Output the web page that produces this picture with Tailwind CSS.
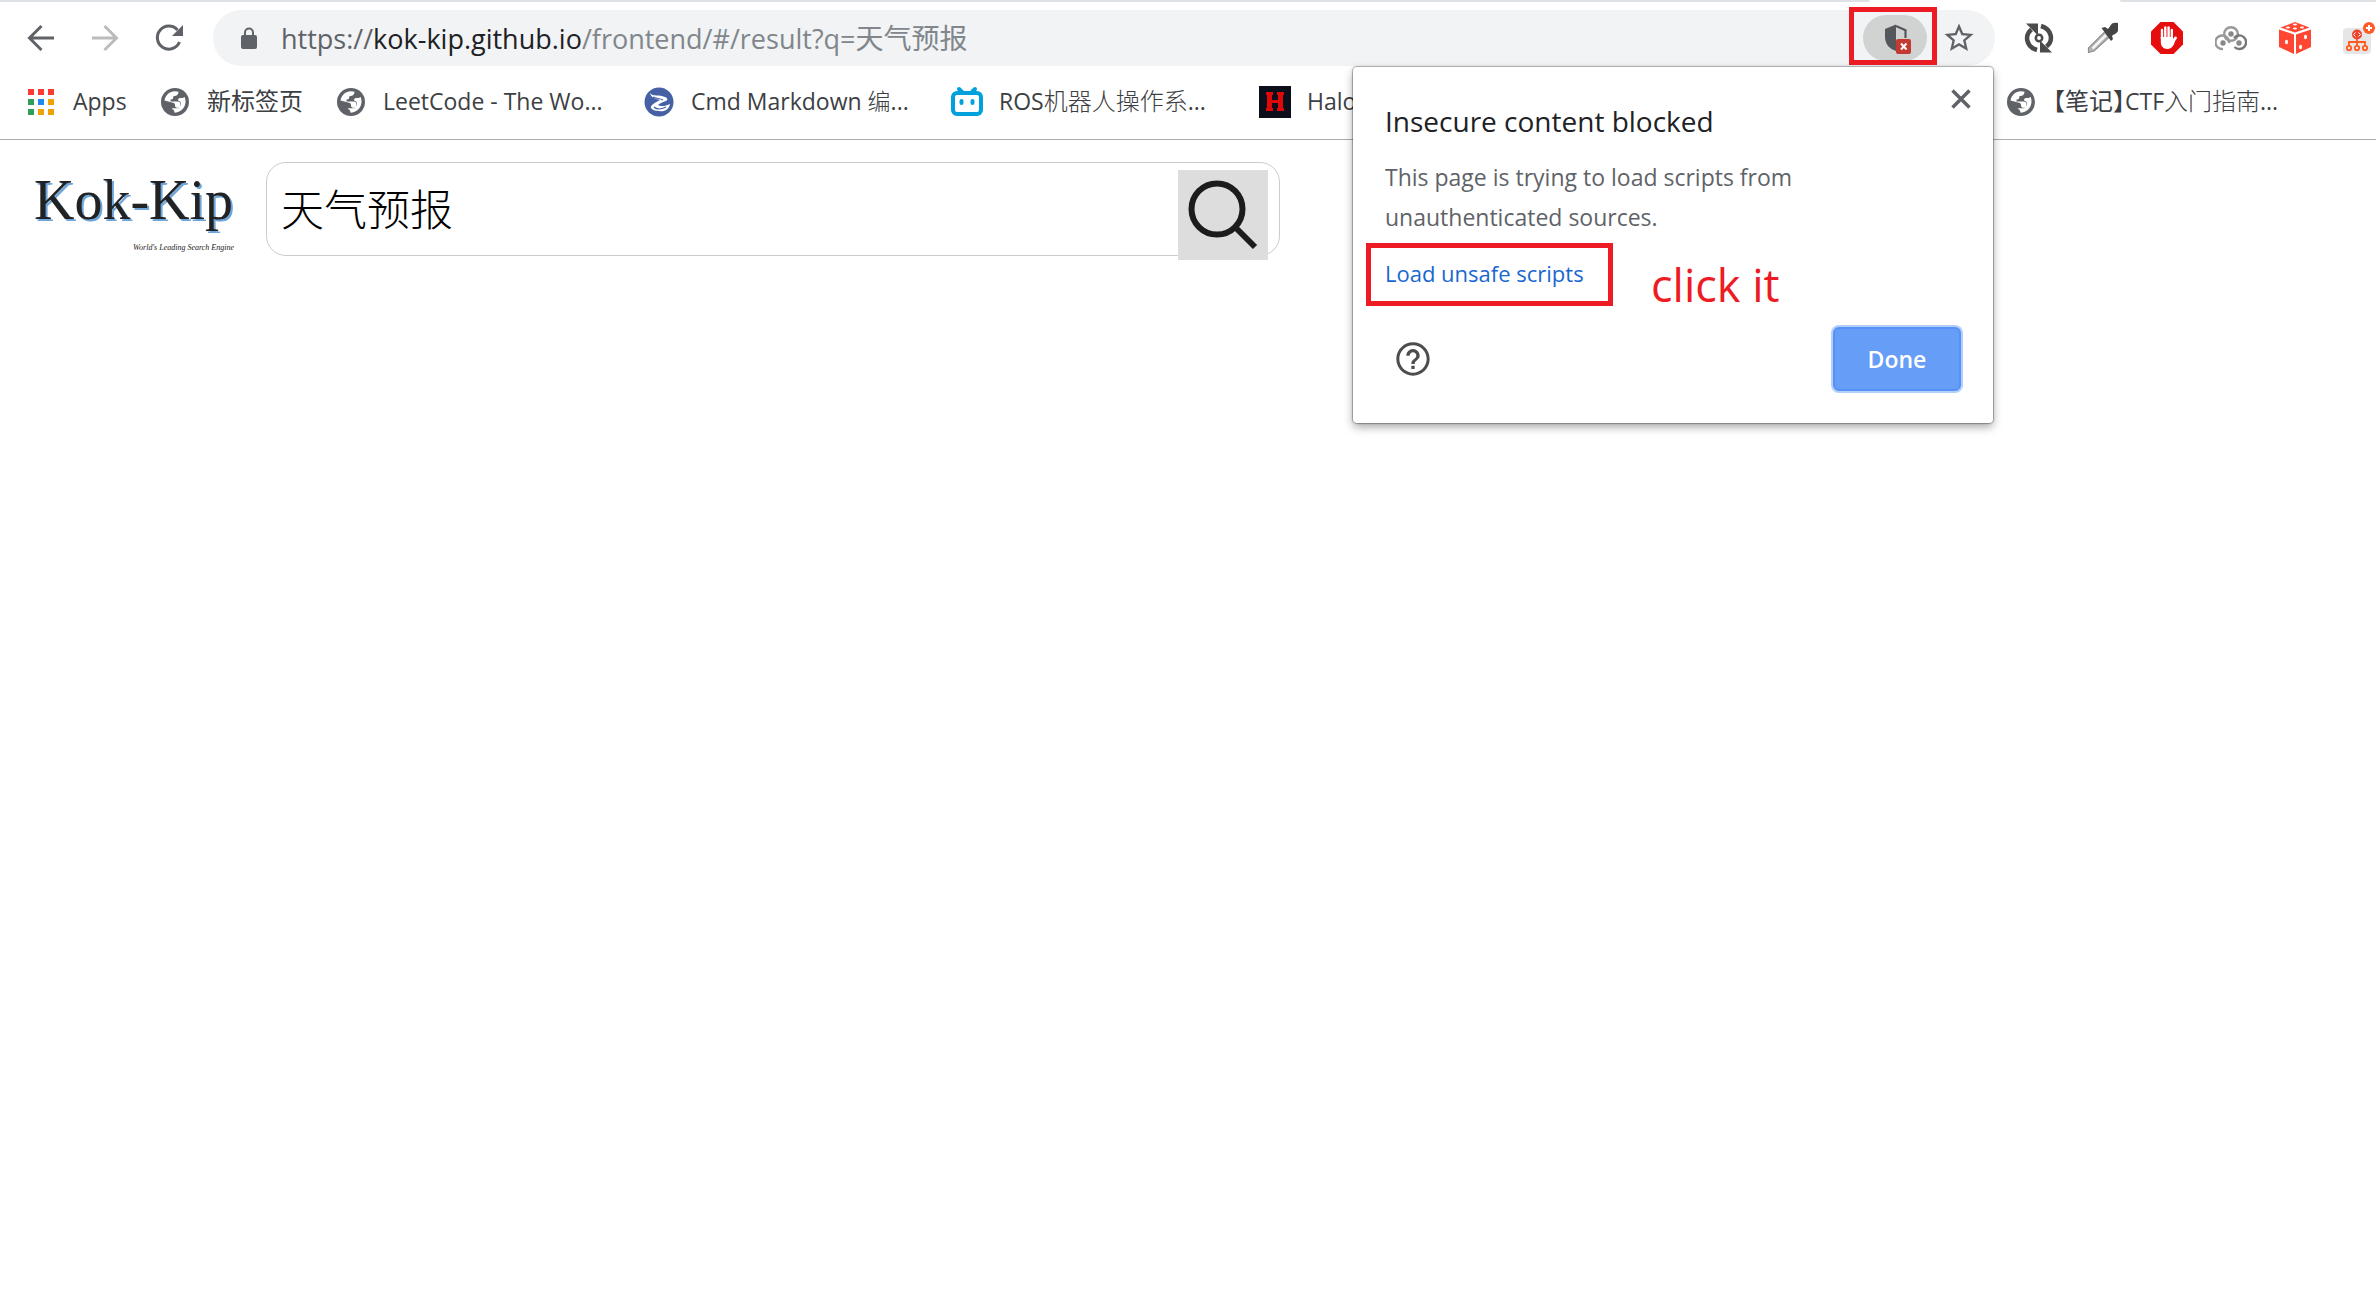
<!DOCTYPE html>
<html lang="zh-CN">
<head>
<meta charset="utf-8">
<title>Kok-Kip</title>
<script src="https://cdn.jsdelivr.net/npm/@tailwindcss/browser@4"></script>
</head>
<body class="min-h-screen bg-white font-['Open_Sans','Noto_Sans_CJK_SC',sans-serif] text-[#3c4043] overflow-x-hidden">
<svg class="hidden" aria-hidden="true">
  <symbol id="globe" viewBox="-2 -2 32 32"><circle cx="14" cy="14" r="14" fill="#5f6368"/><path fill="#fff" d="M3.500 12.500C4.500 7 8.500 3.500 14 3.300c1.500 0 2.500.2 3.500.5 0 2.500-1.500 4.200-4 4.200-1 0-1.300.7-1.300 1.500 0 1.400-1 2-2.700 2v2h7c2 0 3 .8 3 3.200v3h-2.500c-2 0-3-.5-3-2.500 0-1.700-1-2.700-3-2.700zM13.500 24.700c0-1.800-.5-2.500-3-4.500h5.500c3 0 4-1.200 4-4 0-2-1-3.500-3-3.700 0-1.500.7-2.500 2-2.500 1.500 0 3.500 0 4.800-1 2.700 8-2.300 15.700-10.300 15.700z"/></symbol>
</svg>

<header class="relative border-b border-[#aaadb0] bg-white">
  <div class="flex h-[2px] justify-between">
    <div class="flex-1 rounded-br-lg bg-[#dee1e6]"></div>
    <div class="ml-[250px] w-[256px] rounded-bl-lg bg-[#dee1e6]"></div>
  </div>

  <div class="flex items-center pt-2 pl-[25px]">
    <nav class="flex gap-8" aria-label="Navigation">
      <button aria-label="Back"><svg class="size-8" viewBox="0 0 32 32" fill="none" stroke="#5f6368" stroke-width="3"><path d="M29 16H5M16.500 4 4.500 16l12 12"/></svg></button>
      <button aria-label="Forward" disabled><svg class="size-8" viewBox="0 0 32 32" fill="none" stroke="#babcbe" stroke-width="3"><path d="M3 16h24M15.500 4l12 12-12 12"/></svg></button>
      <button aria-label="Reload"><svg class="size-8" viewBox="0 0 32 32" fill="none" stroke="#5f6368" stroke-width="3"><path d="M26.500 20A11.500 11.500 0 1 1 24.500 8"/><path fill="#5f6368" stroke="none" d="M30 3v11H19z"/></svg></button>
    </nav>
    <div class="ml-7 flex h-14 flex-1 items-center rounded-full bg-[#f1f3f4] pr-5 pl-7">
      <svg class="mr-6 h-[22px] w-4" viewBox="0 0 16 22"><rect y="8" width="16" height="14" rx="2" fill="#5f6368"/><path d="M4 9V5.500a4 4 0 0 1 8 0V9" fill="none" stroke="#5f6368" stroke-width="2"/></svg>
      <div class="flex-1 text-[27px] leading-8 whitespace-nowrap text-[#80868b]"><span class="text-[#5f6368]">https://</span><span class="text-[#202124]">kok-kip.github.io</span>/frontend/#/result?q=<span class="text-[28px]">天气预报</span></div>
      <div class="relative">
        <button class="flex h-[46px] w-16 items-center justify-center rounded-full bg-[#d1d3d3]" aria-label="Insecure content blocked">
          <svg class="size-8" viewBox="0 0 32 32"><path fill="#54585d" d="M17 2.500 6 7v8c0 7 4.500 12 11 14z"/><path d="M17 4l9.500 4.200V16" fill="none" stroke="#54585d" stroke-width="2.200"/><rect x="17" y="17" width="15" height="15" rx="2" fill="#c53a30"/><path d="M22 21.500l5.500 6m0-6-5.500 6" stroke="#fff" stroke-width="2"/></svg>
        </button>
        <div class="pointer-events-none absolute -top-[8px] -left-[14px] h-[58px] w-[88px] border-5 border-[#ed1c24]"></div>
      </div>
      <button class="ml-4" aria-label="Bookmark this page"><svg class="size-8" viewBox="1 1 22 22" fill="#5f6368"><path d="M22 9.240l-7.190-.62L12 2 9.190 8.630 2 9.240l5.460 4.730L5.820 21 12 17.270 18.180 21l-1.630-7.030L22 9.240zM12 15.400l-3.760 2.270 1-4.280-3.320-2.880 4.380-.38L12 6.100l1.710 4.040 4.380.38-3.320 2.880 1 4.280L12 15.400z"/></svg></button>
    </div>
    <div class="ml-7 flex gap-8 pr-px">
      <button aria-label="Sync"><svg class="size-8" viewBox="0 0 32 32" fill="none" stroke="#4b4b4b"><path stroke-width="4.500" d="M14 28C2.500 24.500 1.500 13 8.500 7.500M18 4C29.500 7.500 30.500 19 23.500 24.500"/><path fill="#4b4b4b" stroke="none" d="M3 1.500h12v12zM29 30.500H17v-12z"/><circle cx="16" cy="16" r="3.200" stroke-width="2.500"/></svg></button>
      <button aria-label="Color picker"><svg class="size-8" viewBox="0 0 32 32"><path d="M1.500 30.500v-4.500L18 9.500l5 5L7 29z" fill="#b5b5b5" stroke="#8e8e8e" stroke-width="1.200"/><path d="M5.500 26.500 19 13" stroke="#f5f5f5" stroke-width="2.500"/><path fill="#444" d="M14.500 6l3.500-1 3 2 4-5.500C28 0 31 1 31 1v8c-1 2-3 3-5 4l-1 1 1 3-2 2z"/></svg></button>
      <button aria-label="AdBlock"><svg class="size-8" viewBox="0 0 32 32"><path fill="#e60d0d" d="M9.500 0h13L32 9.500v13L22.500 32h-13L0 22.500v-13z"/><g stroke="#fff" stroke-width="2.400" stroke-linecap="round" fill="none"><path d="M11 17V8M14.300 15V5.500M17.600 15V5.500M20.800 17V8"/><path stroke-width="3" d="M21 21l3.500-5"/></g><path fill="#fff" d="M9.800 15H22v5l2-1c-1 4-3 8-7.500 8S9.800 24 9.800 20z"/></svg></button>
      <button aria-label="Linked circles"><svg class="size-8" viewBox="0 0 32 32" fill="none" stroke-width="2.400"><path stroke="#999" d="M8 27a6.800 6.800 0 1 1 6-6"/><circle cx="16" cy="12" r="6.800" stroke="#999"/><path stroke="#777" d="M19 16a6.800 6.800 0 1 1 .5 9"/><g stroke="none" fill="#888"><circle cx="8" cy="21" r="2.700"/><circle cx="16" cy="12" r="2.700"/><circle cx="24" cy="21" r="2.700"/></g></svg></button>
      <button aria-label="Dice"><svg class="size-8" viewBox="0 0 32 32"><path fill="#ff4632" d="M16 0l14.500 5.500L16 10.500 1.500 5.500zM0 7.500l15 5V32L0 25zM32 7.500l-15 5V32l15-7z"/><g fill="#fff"><ellipse cx="9" cy="5.500" rx="2" ry="1"/><ellipse cx="16" cy="6.500" rx="2" ry="1"/><ellipse cx="23" cy="5.500" rx="2" ry="1"/><ellipse cx="16" cy="2.500" rx="2" ry="1"/><ellipse cx="7.500" cy="20" rx="1.500" ry="2.300"/><ellipse cx="26.500" cy="15" rx="1.500" ry="2.300"/><ellipse cx="21.500" cy="25" rx="1.500" ry="2.300"/></g></svg></button>
      <button aria-label="Site map"><svg class="size-8" viewBox="0 0 32 32"><rect y="6" width="28" height="26" rx="4" fill="#e6e6e6"/><g fill="none" stroke="#ff5a1f" stroke-width="1.800"><circle cx="6" cy="26" r="2.200"/><circle cx="14" cy="26" r="2.200"/><circle cx="22" cy="26" r="2.200"/><path d="M6 24v-4h16v4M14 16v8"/></g><circle cx="14" cy="12.500" r="5" fill="#f0442c"/><path d="M12.500 10.500l-2 2 2 2m3-4 2 2-2 2" stroke="#fff" fill="none"/><circle cx="26" cy="6" r="6" fill="#ff5a2a"/><path d="M26 3v6m-3-3h6" stroke="#fff" stroke-width="2"/></svg></button>
    </div>
  </div>

  <nav class="flex h-[73px] items-center pb-px pl-[25px] gap-8 text-[23px] leading-8 whitespace-nowrap" aria-label="Bookmarks">
    <a href="#" class="flex items-center gap-4">
      <svg class="size-8 shrink-0" viewBox="0 0 32 32"><path fill="#fb3b32" d="M3 3h6v6H3zM13 3h6v6h-6zM23 3h6v6h-6z"/><path fill="#2e9e58" d="M3 13h6v6H3zM3 23h6v6H3z"/><path fill="#1e88f5" d="M13 13h6v6h-6z"/><path fill="#eea208" d="M23 13h6v6h-6zM13 23h6v6h-6zM23 23h6v6h-6z"/></svg>
      <span class="w-[54px] pb-0.5">Apps</span></a>
    <a href="#" class="flex items-center gap-4"><svg class="size-8 shrink-0"><use href="#globe"/></svg><span class="w-24 pb-0.5 text-2xl">新标签页</span></a>
    <a href="#" class="flex items-center gap-4"><svg class="size-8 shrink-0"><use href="#globe"/></svg><span class="w-[228px] pb-0.5">LeetCode - The Wo...</span></a>
    <a href="#" class="flex items-center gap-4">
      <svg class="size-8 shrink-0" viewBox="0 0 32 32"><circle cx="16" cy="16" r="14.500" fill="#4560a5"/><path d="M7 7c3 4 9 1 15 4 3 1 3 3 1 4-3 1-6 2-8 4 3 2 8 1 12-1-1 6-6 8-11 7-4 0-7-1-8-3-1-3 4-5 9-8-4-1-9-2-10-7z" fill="#fff"/><path d="M10 11c3 2 6 1 10 3M11 21c3 3 8 2 12 0" fill="none" stroke="#4560a5" stroke-width="1.200"/></svg>
      <span class="w-[228px] pb-0.5">Cmd Markdown <span class="font-light">编</span>...</span></a>
    <a href="#" class="flex items-center gap-4">
      <svg class="size-8 shrink-0" viewBox="0 0 32 32" fill="none" stroke="#00a1dc" stroke-width="4" stroke-linecap="round"><rect x="2" y="7" width="28" height="21" rx="4"/><path d="M8 3l4 4M24 3l-4 4M10.500 15v2M21.500 15v2"/></svg>
      <span class="w-[228px] pb-0.5">ROS<span class="text-2xl font-light">机器人操作系</span>...</span></a>
    <a href="#" class="flex flex-1 items-center gap-4">
      <svg class="size-8 shrink-0" viewBox="0 0 32 32"><path fill="#0c0f1a" d="M0 0h32v32H0z"/><path fill="#e00808" d="M7 6h7v3h-1v5h6V9h-1V6h7v3h-1v13h1v3h-7v-3h1v-5h-6v5h1v3H7v-3h1V9H7z"/></svg>
      <span class="pb-0.5">Halo</span></a>
    <a href="#" class="flex items-center gap-4"><svg class="size-8 shrink-0"><use href="#globe"/></svg><span class="w-[323px] pb-0.5"><span class="-ml-3 text-2xl">【笔记】</span><span class="-ml-3">CTF</span><span class="text-2xl font-light">入门指南</span>...</span></a>
  </nav>

  <section role="dialog" aria-labelledby="blocked" class="absolute top-[67px] right-[383px] z-10 h-[356px] w-[640px] rounded bg-white px-8 shadow-[0_0_1px_1px_rgba(0,0,0,.3),0_4px_10px_rgba(0,0,0,.35)]">
    <button class="absolute top-[22px] right-[22px]" aria-label="Close"><svg class="size-5" viewBox="0 0 20 20" stroke="#5f6368" stroke-width="3.500"><path d="M1.500 1.500l17 17m0-17-17 17"/></svg></button>
    <h1 id="blocked" class="pt-[34px] text-[28px] leading-10 text-[#202124]">Insecure content blocked</h1>
    <p class="pt-4 text-[23px] leading-10 text-[#5f6368]">This page is trying to load scripts from<br>unauthenticated sources.</p>
    <div class="relative mt-4 flex">
      <a href="#" class="text-[22px] leading-10 text-[#1967d2]">Load unsafe scripts</a>
      <div class="pointer-events-none absolute -top-[10px] -left-[19px] h-[63px] w-[247px] border-5 border-[#ed1c24]"></div>
      <span class="absolute top-2 left-[266px] text-[45px] leading-12 text-[#ed1c24]">click it</span>
    </div>
    <div class="mt-[34px] flex items-center justify-between pl-2">
      <button aria-label="Help"><svg class="size-10" viewBox="0 0 24 24" fill="#4d4d4d"><path d="M11 18h2v-2h-2v2zm1-16C6.480 2 2 6.480 2 12s4.480 10 10 10 10-4.480 10-10S17.520 2 12 2zm0 18.200c-4.500 0-8.200-3.700-8.200-8.200S7.500 3.800 12 3.800s8.200 3.700 8.200 8.200-3.700 8.200-8.200 8.200zM12 6c-2.210 0-4 1.790-4 4h2c0-1.100.9-2 2-2s2 .9 2 2c0 2-3 1.750-3 5h2c0-2.250 3-2.500 3-5 0-2.210-1.790-4-4-4z"/></svg></button>
      <button class="h-16 w-32 rounded-md border-2 border-[#5692f5] bg-[#669df6] text-[23px] font-semibold text-white ring-2 ring-[#b3cefb]">Done</button>
    </div>
  </section>
</header>

<main class="flex items-start gap-8 pt-[22px] pl-[34px]">
  <a href="#" class="w-[200px] whitespace-nowrap text-[#222] font-['Liberation_Serif',serif]">
    <span class="block text-[56px] leading-[76px] text-shadow-[2px_2px_0_#6ea6dc]">Kok-Kip</span>
    <span class="block text-right text-[8px] leading-5 italic">World's Leading Search Engine</span>
  </a>
  <form class="flex h-[94px] w-[1014px] items-start rounded-[20px] border border-[#ccc] pr-[11px] pl-[14px]">
    <input aria-label="Search" value="天气预报" class="h-[88px] min-w-0 flex-1 text-[43px] font-light text-black outline-none font-['Noto_Sans_CJK_SC',sans-serif]">
    <button type="button" class="mt-[7px] size-[90px] bg-[#ddd]" aria-label="Search"><svg class="size-[90px]" viewBox="0 0 90 90" fill="none" stroke="#1c1c1c" stroke-width="6"><circle cx="39" cy="39" r="25.500"/><path d="M57 57l20 20"/></svg></button>
  </form>
</main>
</body>
</html>
